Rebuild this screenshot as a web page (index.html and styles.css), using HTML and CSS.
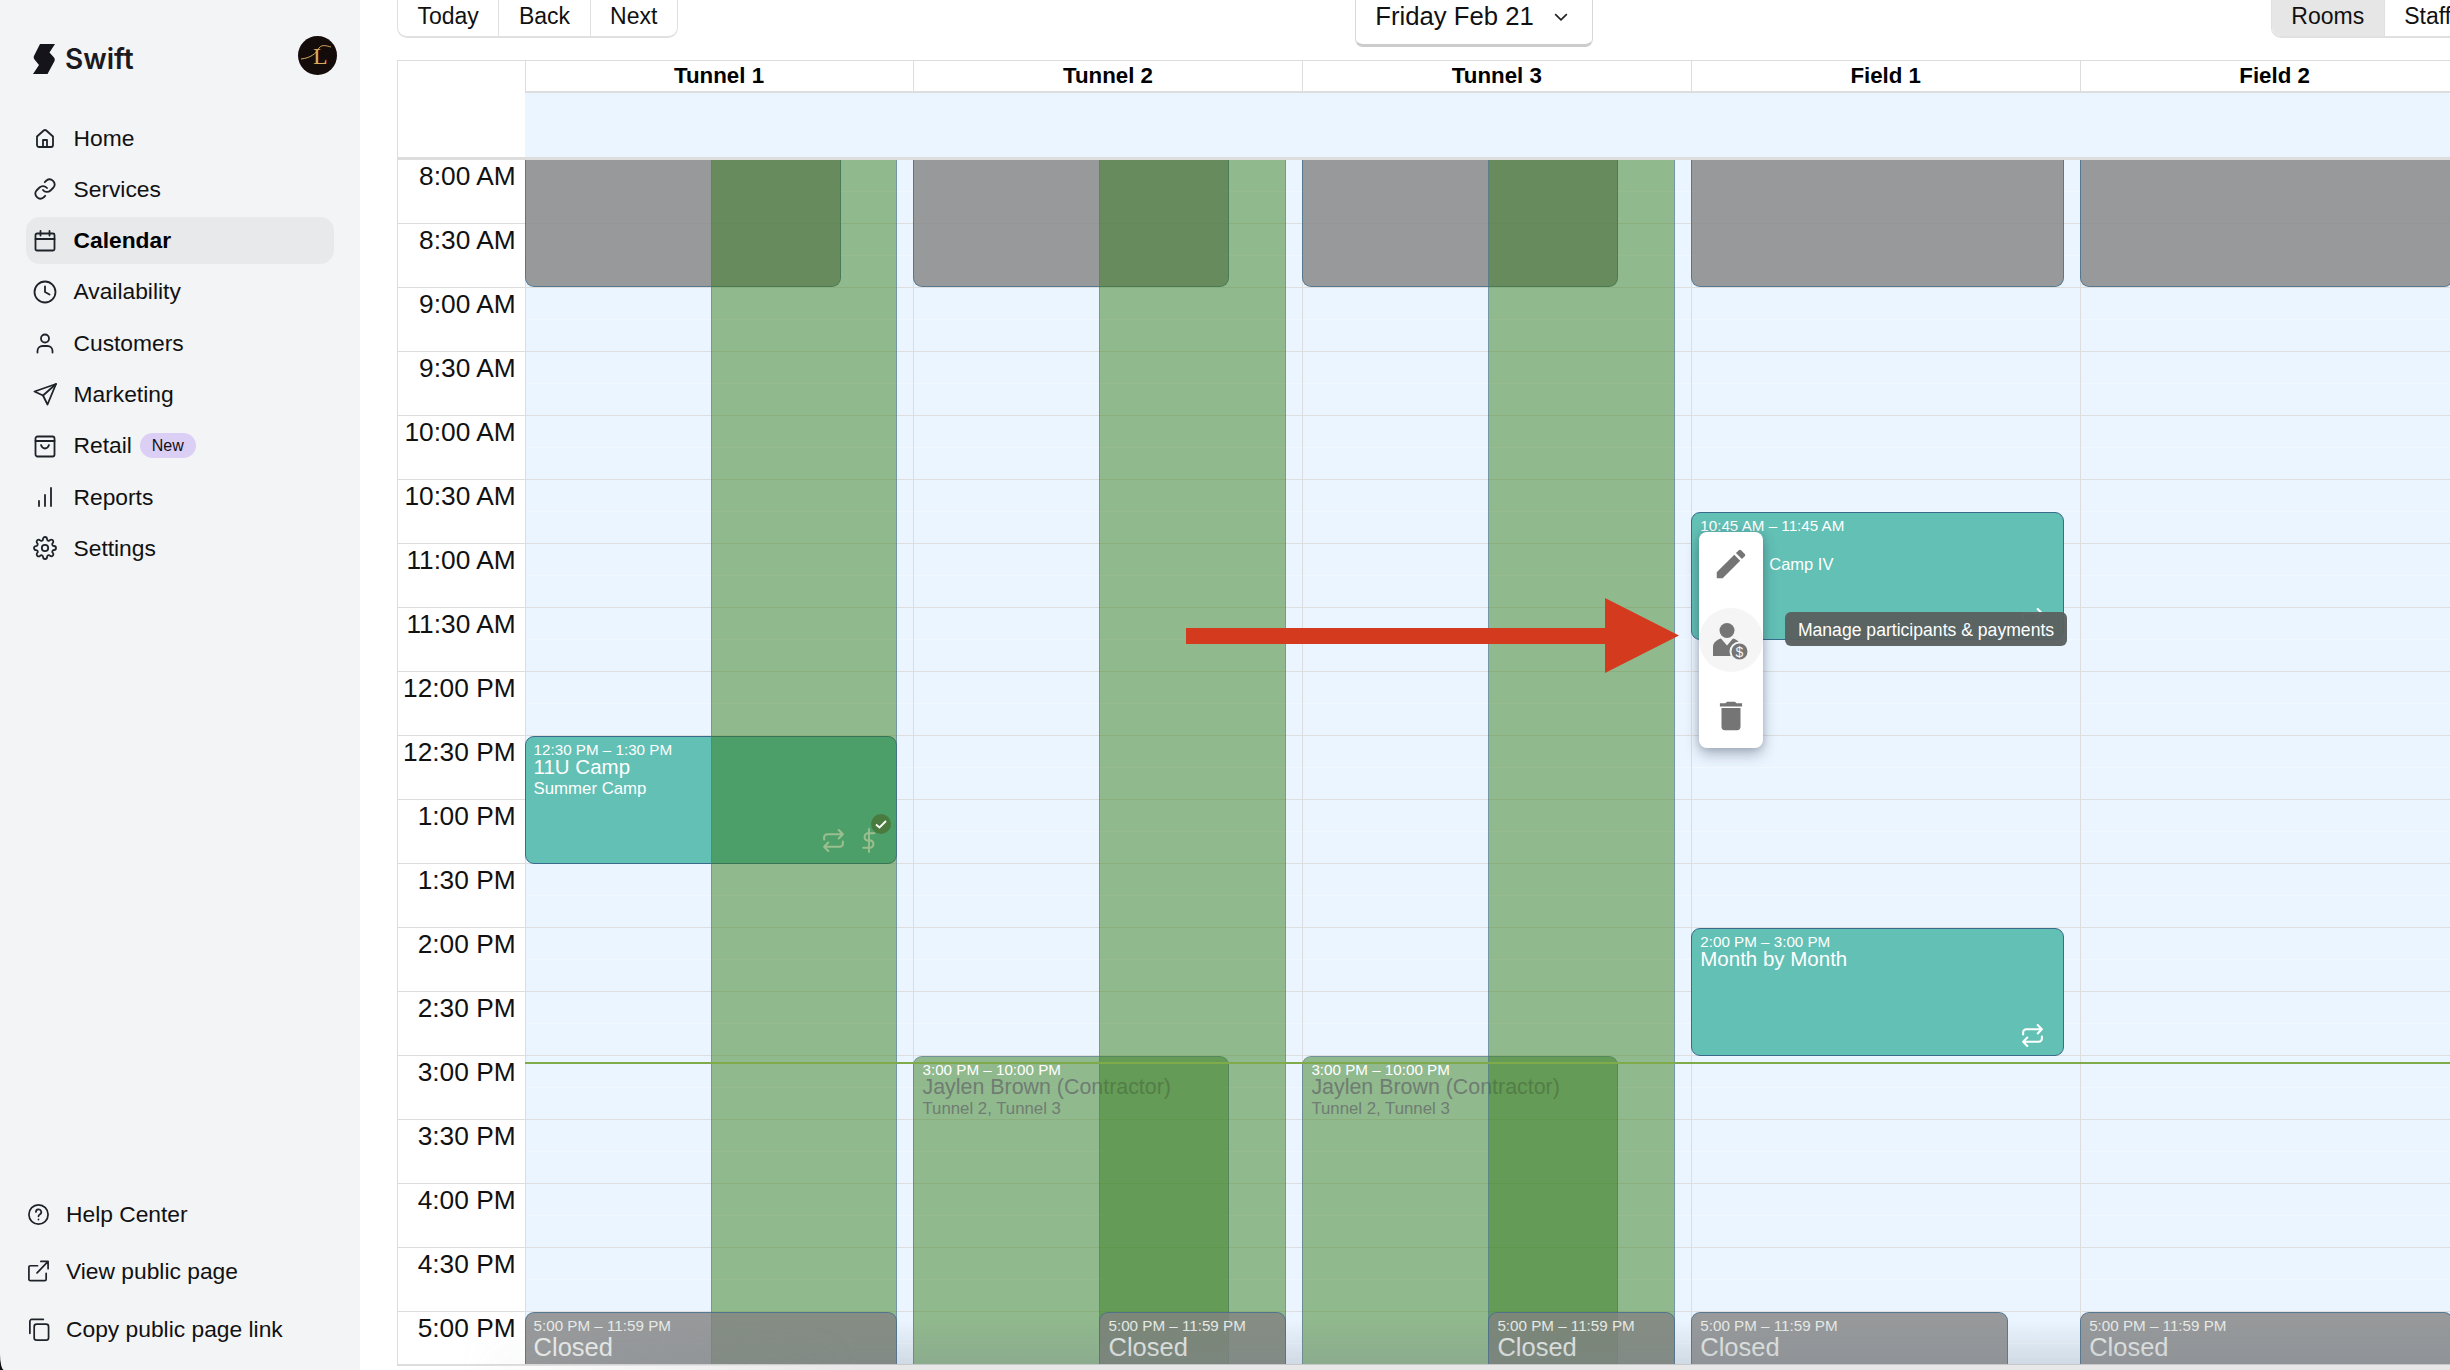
FILE: index.html
```html
<!DOCTYPE html>
<html lang="en">
<head>
  <meta charset="UTF-8" />
  <title>Swift - Calendar</title>
  <link rel="stylesheet" href="styles.css">
</head>
<body>
<div class="app">

  <aside class="sidebar">
    <div class="brand">
      <div class="logo">
        <svg class="logo-mark" viewBox="0 0 22 30"><path d="M7 0H22L16.5 8.5 21 13.5Q22.5 15.5 21 18L14.5 30H0L6 21 1.5 15.5Q0 13.5 1.2 11.5Z"/></svg>
        <span class="logo-name">Swift</span>
      </div>
      <svg class="avatar" viewBox="0 0 39 39">
        <circle cx="19.5" cy="19.5" r="19.5" fill="#140b0b"/>
        <text x="15" y="28" class="avatar-letter">L</text>
        <path d="M3 23C12 22 18 18 21 12 24 8 29 10 33 11" fill="none" stroke="#d9a95c" stroke-width="1"/>
      </svg>
    </div>

    <nav class="nav">
      <a class="nav-item">
        <svg class="icon" viewBox="0 0 24 24"><path d="M4 10.5 10.7 4.5a2 2 0 0 1 2.6 0L20 10.5V19a2 2 0 0 1-2 2H6a2 2 0 0 1-2-2z"/><path d="M10 21v-7h4v7"/></svg>
        <span>Home</span>
      </a>
      <a class="nav-item">
        <svg class="icon" viewBox="0 0 24 24"><path d="M10 13a5 5 0 0 0 7.5.5l3-3a5 5 0 0 0-7-7l-1.7 1.7"/><path d="M14 11a5 5 0 0 0-7.5-.5l-3 3a5 5 0 0 0 7 7l1.7-1.7"/></svg>
        <span>Services</span>
      </a>
      <a class="nav-item active">
        <svg class="icon" viewBox="0 0 24 24"><rect x="2.5" y="4.5" width="19" height="17" rx="1.5"/><path d="M2.5 10h19M7.500 2v4.500M16.500 2v4.500"/></svg>
        <span>Calendar</span>
      </a>
      <a class="nav-item">
        <svg class="icon" viewBox="0 0 24 24"><circle cx="12" cy="12" r="10.500"/><path d="M12 6.500V12l4.500 2.500"/></svg>
        <span>Availability</span>
      </a>
      <a class="nav-item">
        <svg class="icon" viewBox="0 0 24 24"><circle cx="12" cy="7.500" r="4"/><path d="M4.500 21.500v-1.500a5 5 0 0 1 5-5h5a5 5 0 0 1 5 5v1.500"/></svg>
        <span>Customers</span>
      </a>
      <a class="nav-item">
        <svg class="icon" viewBox="0 0 24 24"><path d="M23 2 1.500 9.500l8.500 4 4.500 9z"/><path d="M23 2 10 13.500"/></svg>
        <span>Marketing</span>
      </a>
      <a class="nav-item">
        <svg class="icon" viewBox="0 0 24 24"><rect x="2.500" y="2.500" width="19" height="20" rx="2"/><path d="M2.500 7h19M8 11c1 3 2.500 3.500 4 3.500s3-.5 4-3.500"/></svg>
        <span>Retail</span>
        <span class="badge">New</span>
      </a>
      <a class="nav-item">
        <svg class="icon" viewBox="0 0 24 24"><path d="M6 16v5M12 10v11M18 3v18"/></svg>
        <span>Reports</span>
      </a>
      <a class="nav-item">
        <svg class="icon" viewBox="0 0 24 24"><circle cx="12" cy="12" r="3.200"/><path d="M19.400 15a1.650 1.650 0 0 0 .33 1.820l.06.06a2 2 0 0 1 0 2.830 2 2 0 0 1-2.830 0l-.06-.06a1.650 1.650 0 0 0-1.820-.33 1.650 1.650 0 0 0-1 1.510V21a2 2 0 0 1-2 2 2 2 0 0 1-2-2v-.09A1.650 1.650 0 0 0 9 19.400a1.650 1.650 0 0 0-1.820.33l-.06.06a2 2 0 0 1-2.830 0 2 2 0 0 1 0-2.830l.06-.06a1.650 1.650 0 0 0 .33-1.820 1.650 1.650 0 0 0-1.510-1H3a2 2 0 0 1-2-2 2 2 0 0 1 2-2h.09A1.650 1.650 0 0 0 4.600 9a1.650 1.650 0 0 0-.33-1.820l-.06-.06a2 2 0 0 1 0-2.830 2 2 0 0 1 2.830 0l.06.06a1.650 1.650 0 0 0 1.820.33H9a1.650 1.650 0 0 0 1-1.510V3a2 2 0 0 1 2-2 2 2 0 0 1 2 2v.09a1.650 1.650 0 0 0 1 1.510 1.650 1.650 0 0 0 1.820-.33l.06-.06a2 2 0 0 1 2.830 0 2 2 0 0 1 0 2.830l-.06.06a1.650 1.650 0 0 0-.33 1.820V9a1.650 1.650 0 0 0 1.510 1H21a2 2 0 0 1 2 2 2 2 0 0 1-2 2h-.09a1.650 1.650 0 0 0-1.510 1z"/></svg>
        <span>Settings</span>
      </a>
    </nav>

    <div class="side-footer">
      <a class="foot-item">
        <svg class="icon" viewBox="0 0 24 24"><circle cx="12" cy="12" r="10"/><path d="M9.300 9.300a2.800 2.800 0 1 1 4 2.600c-.8.5-1.300 1-1.300 2"/><path d="M12 17.200v.1"/></svg>
        <span>Help Center</span>
      </a>
      <a class="foot-item">
        <svg class="icon" viewBox="0 0 24 24"><path d="M20 14v6a1.500 1.500 0 0 1-1.500 1.500h-15A1.500 1.500 0 0 1 2 20V7.500A1.500 1.500 0 0 1 3.500 6H11"/><path d="M14.500 1.500H22V9M22 1.500 10.500 13.500"/></svg>
        <span>View public page</span>
      </a>
      <a class="foot-item">
        <svg class="icon" viewBox="0 0 24 24"><rect x="7.500" y="6.500" width="15" height="16.500" rx="2.500"/><path d="M3 16V3.500A2 2 0 0 1 5 1.500h12"/></svg>
        <span>Copy public page link</span>
      </a>
    </div>
  </aside>

  <main class="main">
    <div class="toolbar">
      <div class="btn-group">
        <button class="btn">Today</button>
        <button class="btn">Back</button>
        <button class="btn">Next</button>
      </div>
      <button class="date-btn">
        <span>Friday Feb 21</span>
        <svg viewBox="0 0 24 24"><path d="M5 8.500l7 7 7-7"/></svg>
      </button>
      <div class="btn-group view-group">
        <button class="btn selected">Rooms</button>
        <button class="btn">Staff</button>
      </div>
    </div>

    <div class="calendar">
      <div class="cal-head">
        <div class="head-gutter"></div>
        <div class="head-col"><div class="head-name">Tunnel 1</div><div class="all-day"></div></div>
        <div class="head-col"><div class="head-name">Tunnel 2</div><div class="all-day"></div></div>
        <div class="head-col"><div class="head-name">Tunnel 3</div><div class="all-day"></div></div>
        <div class="head-col"><div class="head-name">Field 1</div><div class="all-day"></div></div>
        <div class="head-col"><div class="head-name">Field 2</div><div class="all-day"></div></div>
      </div>

      <div class="cal-body">
        <div class="times">
          <div class="time">8:00 AM</div>
          <div class="time">8:30 AM</div>
          <div class="time">9:00 AM</div>
          <div class="time">9:30 AM</div>
          <div class="time">10:00 AM</div>
          <div class="time">10:30 AM</div>
          <div class="time">11:00 AM</div>
          <div class="time">11:30 AM</div>
          <div class="time">12:00 PM</div>
          <div class="time">12:30 PM</div>
          <div class="time">1:00 PM</div>
          <div class="time">1:30 PM</div>
          <div class="time">2:00 PM</div>
          <div class="time">2:30 PM</div>
          <div class="time">3:00 PM</div>
          <div class="time">3:30 PM</div>
          <div class="time">4:00 PM</div>
          <div class="time">4:30 PM</div>
          <div class="time">5:00 PM</div>
        </div>

        <!-- Tunnel 1 -->
        <div class="day-col">
          <div class="ev ev-off" style="top:0;height:127px;width:316px"></div>
          <div class="ev ev-teal" style="top:576px;height:128px;width:372px">
            <div class="ev-time">12:30 PM – 1:30 PM</div>
            <div class="ev-title">11U Camp</div>
            <div class="ev-sub">Summer Camp</div>
            <div class="ev-icons ev-icons-high">
              <svg class="ev-repeat" viewBox="0 0 24 24"><path d="M17 2l4 4-4 4M3 11V9a3 3 0 0 1 3-3h15M7 22l-4-4 4-4M21 13v2a3 3 0 0 1-3 3H3"/></svg>
              <svg class="ev-dollar" viewBox="0 0 14 26"><path d="M7 1v24M12.500 5.500H5a4 4 0 0 0 0 7.500h4a4 4 0 0 1 0 7.500H1"/></svg>
            </div>
          </div>
          <div class="shade"></div>
          <svg class="paid-check" viewBox="0 0 20 20"><circle cx="10" cy="10" r="10"/><path d="M5 10.500l3.500 3L15 7"/></svg>
          <div class="ev ev-off ev-closed" style="top:1152px;height:60px;width:372px">
            <div class="ev-time">5:00 PM – 11:59 PM</div>
            <div class="ev-title">Closed</div>
          </div>
        </div>

        <!-- Tunnel 2 -->
        <div class="day-col">
          <div class="ev ev-off" style="top:0;height:127px;width:316px"></div>
          <div class="ev ev-staff" style="top:896px;height:320px;width:316px">
            <div class="ev-time">3:00 PM – 10:00 PM</div>
            <div class="ev-title">Jaylen Brown (Contractor)</div>
            <div class="ev-sub">Tunnel 2, Tunnel 3</div>
          </div>
          <div class="shade"></div>
          <div class="ev ev-off ev-closed" style="top:1152px;left:186px;height:60px;width:186.5px">
            <div class="ev-time">5:00 PM – 11:59 PM</div>
            <div class="ev-title">Closed</div>
          </div>
        </div>

        <!-- Tunnel 3 -->
        <div class="day-col">
          <div class="ev ev-off" style="top:0;height:127px;width:316px"></div>
          <div class="ev ev-staff" style="top:896px;height:320px;width:316px">
            <div class="ev-time">3:00 PM – 10:00 PM</div>
            <div class="ev-title">Jaylen Brown (Contractor)</div>
            <div class="ev-sub">Tunnel 2, Tunnel 3</div>
          </div>
          <div class="shade"></div>
          <div class="ev ev-off ev-closed" style="top:1152px;left:186px;height:60px;width:186.5px">
            <div class="ev-time">5:00 PM – 11:59 PM</div>
            <div class="ev-title">Closed</div>
          </div>
        </div>

        <!-- Field 1 -->
        <div class="day-col">
          <div class="ev ev-off" style="top:0;height:127px;width:373px"></div>
          <div class="ev ev-teal" style="top:352px;height:128px;width:373px">
            <div class="ev-time">10:45 AM – 11:45 AM</div>
            <div class="ev-title">&nbsp;</div>
            <div class="ev-sub ev-sub-indent">Camp IV</div>
            <div class="ev-icons">
              <svg class="ev-repeat" viewBox="0 0 24 24"><path d="M17 2l4 4-4 4M3 11V9a3 3 0 0 1 3-3h15M7 22l-4-4 4-4M21 13v2a3 3 0 0 1-3 3H3"/></svg>
            </div>
          </div>
          <div class="ev ev-teal" style="top:768px;height:128px;width:373px">
            <div class="ev-time">2:00 PM – 3:00 PM</div>
            <div class="ev-title">Month by Month</div>
            <div class="ev-icons">
              <svg class="ev-repeat" viewBox="0 0 24 24"><path d="M17 2l4 4-4 4M3 11V9a3 3 0 0 1 3-3h15M7 22l-4-4 4-4M21 13v2a3 3 0 0 1-3 3H3"/></svg>
            </div>
          </div>
          <div class="ev ev-off ev-closed" style="top:1152px;height:60px;width:317px">
            <div class="ev-time">5:00 PM – 11:59 PM</div>
            <div class="ev-title">Closed</div>
          </div>
        </div>

        <!-- Field 2 -->
        <div class="day-col">
          <div class="ev ev-off" style="top:0;height:127px;width:373px"></div>
          <div class="ev ev-off ev-closed" style="top:1152px;height:60px;width:373px">
            <div class="ev-time">5:00 PM – 11:59 PM</div>
            <div class="ev-title">Closed</div>
          </div>
        </div>

        <div class="now-line"></div>
      </div>
    </div>

    <div class="bottom-fade"></div>

    <!-- annotation arrow -->
    <svg class="arrow" viewBox="0 0 493 75"><path d="M0 30H419V0L493 37.500 419 75V46H0Z"/></svg>

    <div class="popup">
      <button class="popup-btn">
        <svg viewBox="0 0 24 24"><path d="M3 17.250V21h3.750L17.810 9.940l-3.750-3.750L3 17.250zM20.710 7.040c.39-.39.39-1.020 0-1.410l-2.340-2.340a.996.996 0 0 0-1.410 0l-1.830 1.830 3.750 3.750 1.830-1.830z"/></svg>
      </button>
      <button class="popup-btn hover">
        <svg class="pay-icon" viewBox="0 0 36 38">
          <circle cx="14" cy="7.500" r="7.500"/>
          <path d="M0 33V24C0 19.500 3.500 17 8 15.500L14 22.500 20 15.500C24.500 17 28 19.500 28 24V33Z"/>
          <circle cx="26.500" cy="28.500" r="9" stroke="#f5f5f5" stroke-width="2"/>
          <text x="26.500" y="33.500" class="pay-sign">$</text>
        </svg>
      </button>
      <button class="popup-btn">
        <svg viewBox="0 0 24 24"><path d="M6 19c0 1.100.9 2 2 2h8c1.100 0 2-.9 2-2V7H6v12zM19 4h-3.500l-1-1h-5l-1 1H5v2h14V4z"/></svg>
      </button>
    </div>

    <div class="tooltip">Manage participants &amp; payments</div>
  </main>

</div>
</body>
</html>
```

FILE: styles.css
```css
* {
  box-sizing: border-box;
}

html, body {
  margin: 0;
  height: 100%;
}

body {
  background: #111;
  font-family: "Liberation Sans", Arial, sans-serif;
  color: #111;
  overflow: hidden;
}

.app {
  display: flex;
  height: 1370px;
  background: #111;
}

/* sidebar */

.sidebar {
  width: 360px;
  flex-shrink: 0;
  display: flex;
  flex-direction: column;
  background: #f3f4f6;
  border-bottom-left-radius: 4px 16px;
}

.brand {
  display: flex;
  justify-content: space-between;
  align-items: flex-start;
  padding: 36px 23px 0 33px;
  height: 114.500px;
}

.logo {
  display: flex;
  align-items: center;
  gap: 10px;
  margin-top: 6px;
}

.logo-mark {
  width: 22px;
  height: 30px;
  fill: #14141a;
}

.logo-name {
  font-family: Inter, "Liberation Sans", sans-serif;
  font-weight: 600;
  font-size: 28px;
  color: #1a1a20;
}

.avatar {
  width: 39px;
  height: 39px;
}

.avatar-letter {
  font-family: "Liberation Serif", serif;
  font-size: 24px;
  fill: #d9a95c;
}

.nav {
  display: flex;
  flex-direction: column;
  gap: 4.300px;
  margin: 0 26px;
}

.nav-item {
  display: flex;
  align-items: center;
  height: 47px;
  padding-left: 7px;
  border-radius: 14px;
  font-size: 22.800px;
}

.nav-item .icon {
  margin-right: 16.500px;
}

.nav-item.active {
  background: #e8e9eb;
  font-weight: 700;
  color: #000;
}

.icon {
  width: 24px;
  height: 24px;
  flex-shrink: 0;
  fill: none;
  stroke: #1d2329;
  stroke-width: 1.800;
  stroke-linecap: round;
  stroke-linejoin: round;
}

.badge {
  margin-left: 8px;
  padding: 0 12px;
  height: 25px;
  line-height: 25px;
  border-radius: 13px;
  background: #dccff5;
  font-size: 16px;
}

.side-footer {
  margin-top: auto;
  padding: 0 0 12px 27px;
}

.foot-item {
  display: flex;
  align-items: center;
  height: 57.500px;
  font-size: 22.800px;
}

.foot-item .icon {
  width: 23px;
  height: 23px;
  margin-right: 16px;
}

/* main area */

.main {
  position: relative;
  flex: 1;
  min-width: 0;
  padding-left: 37px;
  background: #fff;
  overflow: hidden;
}

.toolbar {
  display: flex;
  align-items: flex-start;
  gap: 677.500px;
  height: 60px;
}

.btn-group {
  display: flex;
  flex-shrink: 0;
  height: 44px;
  margin-top: -6px;
  border: 1px solid #e0e0e0;
  border-bottom-width: 2px;
  border-radius: 0 0 10px 10px;
}

.btn {
  padding: 1px 19.500px 0;
  border: 0;
  border-left: 1px solid #e0e0e0;
  background: none;
  font-family: inherit;
  font-size: 23px;
  color: #111;
}

.btn:first-child {
  border-left: 0;
}

.btn.selected {
  background: #e6e6e6;
  border-radius: 0 0 0 9px;
}

.date-btn {
  display: flex;
  align-items: center;
  justify-content: space-between;
  flex-shrink: 0;
  width: 238px;
  height: 62px;
  margin-top: -15px;
  padding: 3px 21px 0 19px;
  border: 1px solid #d8d8d8;
  border-bottom: 3px solid #ccc;
  border-radius: 0 0 8px 8px;
  background: #fff;
  font-family: inherit;
  font-size: 25.700px;
  color: #111;
}

.date-btn svg {
  width: 20px;
  height: 20px;
  fill: none;
  stroke: #222;
  stroke-width: 2;
}

/* calendar grid */

.calendar {
  width: 2072px;
}

.cal-head {
  display: grid;
  grid-template-columns: 127.600px repeat(5, 388.900px);
  border-top: 1px solid #ddd;
  border-bottom: 3px solid #ddd;
}

.head-gutter {
  border-left: 1px solid #ddd;
}

.head-col {
  box-shadow: inset 1px 0 #ddd;
}

.head-name {
  height: 32px;
  line-height: 29px;
  padding-bottom: 2px;
  border-bottom: 2px solid #ddd;
  text-align: center;
  font-size: 22.300px;
  font-weight: 700;
  color: #000;
}

.all-day {
  height: 64px;
  background: #ebf5ff;
}

.cal-body {
  position: relative;
  display: grid;
  grid-template-columns: 127.600px repeat(5, 388.900px);
  height: 1206px;
  overflow: hidden;
  border-bottom: 2px solid #ddd;
}

.times {
  border-left: 1px solid #ddd;
}

.time {
  height: 64px;
  padding-right: 9px;
  border-bottom: 1px solid #ddd;
  line-height: 32px;
  text-align: right;
  font-size: 26.300px;
  color: #111;
}

.day-col {
  position: relative;
  box-shadow: inset 1px 0 #ddd;
  background-color: #ebf5ff;
  background-image:
    linear-gradient(to bottom, transparent 31px, #f2f8ff 31px, #f2f8ff 32px, transparent 32px, transparent 63px, #dedede 63px);
  background-size: 100% 64px;
}

/* events */

.ev {
  position: absolute;
  z-index: 1;
  left: 0;
  padding: 5px 8px;
  border: 1px solid #3a6b8e;
  border-radius: 9px;
  color: #fff;
  overflow: hidden;
}

.ev-teal {
  background: #62c0b5;
}

.ev-off {
  background: rgba(130, 130, 130, 0.8);
  border-color: rgba(58, 107, 142, 0.7);
  border-top-width: 0;
  border-radius: 0 0 9px 9px;
}

.ev-closed {
  z-index: 3;
  border-top-width: 1px;
  border-radius: 9px 9px 0 0;
  color: #e8ebe8;
}

.ev-staff {
  background: rgba(56, 126, 30, 0.5);
  border-color: rgba(80, 110, 170, 0.5);
  color: #6f7d72;
}

.ev-time {
  height: 16px;
  line-height: 16px;
  font-size: 15.200px;
  color: #fff;
  white-space: nowrap;
}

.ev-closed .ev-time {
  color: #e8ebe8;
}

.ev-title {
  height: 20px;
  line-height: 18px;
  font-size: 20.500px;
  white-space: nowrap;
}

.ev-staff .ev-title {
  font-size: 21.400px;
}

.ev-closed .ev-title {
  height: 26px;
  line-height: 26px;
  font-size: 25.500px;
}

.ev-sub {
  height: 21px;
  line-height: 21px;
  font-size: 16.800px;
  white-space: nowrap;
}

.ev-sub-indent {
  padding-left: 69px;
  font-size: 16.500px;
}

.ev-icons {
  position: absolute;
  right: 18px;
  bottom: 7px;
  display: flex;
  align-items: center;
  gap: 16px;
}

.ev-icons-high {
  bottom: 10px;
}

.ev-repeat, .ev-dollar {
  fill: none;
  stroke: #fff;
  stroke-width: 2;
  stroke-linecap: round;
  stroke-linejoin: round;
}

.ev-repeat {
  width: 25px;
  height: 25px;
}

.ev-dollar {
  width: 14px;
  height: 25px;
  margin-right: 2px;
}

.shade {
  position: absolute;
  z-index: 2;
  top: 0;
  bottom: 0;
  left: 186px;
  width: 186.500px;
  background: rgba(56, 126, 30, 0.5);
  border-left: 1px solid rgba(80, 110, 190, 0.45);
  border-right: 1px solid rgba(80, 110, 190, 0.45);
}

.paid-check {
  position: absolute;
  z-index: 3;
  left: 346px;
  top: 654px;
  width: 20px;
  height: 20px;
  fill: #497a3e;
}

.paid-check path {
  fill: none;
  stroke: #fff;
  stroke-width: 1.800;
}

.now-line {
  position: absolute;
  z-index: 4;
  top: 902px;
  left: 127.600px;
  right: 0;
  height: 2px;
  background: #7fab4b;
}

.bottom-fade {
  position: absolute;
  left: 0;
  right: 0;
  bottom: 0;
  height: 50px;
  z-index: 5;
  background: linear-gradient(to bottom, rgba(120, 130, 140, 0) 0, rgba(120, 130, 140, 0.24) 45px, #e8e8e8 45px);
  -webkit-mask-image: linear-gradient(to right, transparent 100px, #000 500px);
  mask-image: linear-gradient(to right, transparent 100px, #000 500px);
}

/* annotation and popup */

.arrow {
  position: absolute;
  z-index: 6;
  left: 826px;
  top: 598px;
  width: 493px;
  height: 75px;
  fill: #d33a1e;
}

.popup {
  position: absolute;
  z-index: 7;
  left: 1339px;
  top: 532px;
  width: 64px;
  display: flex;
  flex-direction: column;
  gap: 12px;
  border-radius: 8px;
  background: #fff;
  box-shadow: 0 6px 14px rgba(40, 50, 70, 0.35), 0 0 6px rgba(40, 50, 70, 0.15);
}

.popup-btn {
  display: flex;
  align-items: center;
  justify-content: center;
  width: 64px;
  height: 64px;
  padding: 0;
  border: 0;
  border-radius: 50%;
  background: none;
}

.popup-btn.hover {
  background: #f5f5f5;
}

.popup-btn svg {
  width: 38px;
  height: 38px;
  fill: #757575;
}

.popup-btn .pay-icon {
  margin-top: 3px;
}

.pay-sign {
  font-family: "Liberation Sans", sans-serif;
  font-size: 14px;
  fill: #f5f5f5;
  text-anchor: middle;
}

.tooltip {
  position: absolute;
  z-index: 7;
  left: 1425px;
  top: 612px;
  width: 282px;
  height: 34px;
  border-radius: 6px;
  background: rgba(90, 96, 95, 0.96);
  color: #fff;
  font-size: 17.600px;
  line-height: 36px;
  text-align: center;
}
```
